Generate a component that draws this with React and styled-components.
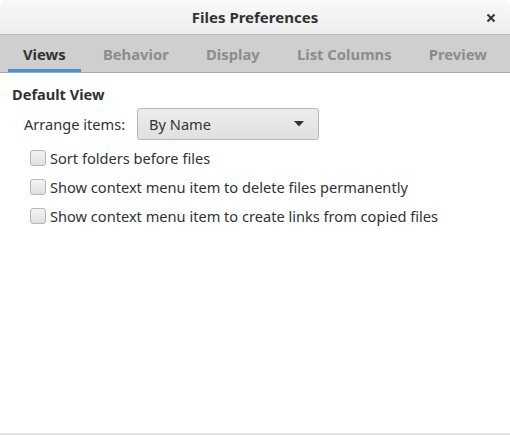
import React from "react";
import styled, { createGlobalStyle } from "styled-components";

const GlobalStyle = createGlobalStyle`
	html, body {
		margin: 0;
		padding: 0;
		background: #ffffff;
	}
	body {
		font-family: "Noto Sans", "DejaVu Sans", sans-serif;
		font-size: 14.6px;
		color: #2e3436;
	}
`;

const tabs = ["Views", "Behavior", "Display", "List Columns", "Preview"];

const options = [
	"Sort folders before files",
	"Show context menu item to delete files permanently",
	"Show context menu item to create links from copied files",
];

const App = () => {
	return (
		<>
			<GlobalStyle />
			<Window>
				<TitleBar>
					<Title>Files Preferences</Title>
					<CloseButton aria-label="Close">
						<svg width="10" height="10" viewBox="0 0 10 10">
							<path d="M1.5 1.5 L8.5 8.5 M8.5 1.5 L1.5 8.5" stroke="#2e3436" strokeWidth="2" />
						</svg>
					</CloseButton>
				</TitleBar>

				<TabBar>
					{tabs.map((tab, i) => (
						<Tab key={tab} active={i === 0}>
							{tab}
						</Tab>
					))}
				</TabBar>

				<Content>
					<SectionTitle>Default View</SectionTitle>
					<ArrangeRow>
						<FieldLabel>Arrange items:</FieldLabel>
						<Combo>
							<span>By Name</span>
							<svg width="10" height="6" viewBox="0 0 10 6">
								<path d="M0 0 L10 0 L5 5.5 Z" fill="#2e3436" />
							</svg>
						</Combo>
					</ArrangeRow>
					<CheckList>
						{options.map((text) => (
							<CheckRow key={text}>
								<CheckBox />
								<span>{text}</span>
							</CheckRow>
						))}
					</CheckList>
				</Content>
			</Window>
		</>
	);
};

const Window = styled.div`
	width: 510px;
	height: 435px;
	display: flex;
	flex-direction: column;
	background: #ffffff;
	border-bottom: 2px solid #e3e3e3;
	box-sizing: border-box;
	overflow: hidden;
`;

const TitleBar = styled.div`
	position: relative;
	height: 35px;
	flex-shrink: 0;
	display: flex;
	align-items: center;
	justify-content: center;
	background: linear-gradient(#f9f9f9, #eeeeee);
	border-top-left-radius: 7px;
	border-top-right-radius: 7px;
	border-bottom: 1px solid #b7b7b7;
	box-sizing: border-box;
`;

const Title = styled.div`
	font-weight: bold;
	font-size: 15px;
	color: #2e3436;
`;

const CloseButton = styled.div`
	position: absolute;
	right: 14px;
	top: 13px;
	display: flex;
`;

const TabBar = styled.div`
	height: 38px;
	flex-shrink: 0;
	display: flex;
	align-items: stretch;
	justify-content: space-between;
	padding: 0 8px;
	background: #cfcfcf;
	border-bottom: 1px solid #a8a8a8;
	box-sizing: border-box;
`;

const Tab = styled.div`
	display: flex;
	align-items: center;
	justify-content: center;
	padding: 3px 15px 0;
	font-weight: bold;
	font-size: 14.8px;
	color: ${(p) => (p.active ? "#2e3436" : "#8b8d8d")};
	border-bottom: 3px solid ${(p) => (p.active ? "#4a90d9" : "transparent")};
`;

const Content = styled.div`
	flex: 1;
	padding: 11px 12px;
`;

const SectionTitle = styled.div`
	font-weight: bold;
	line-height: 20px;
`;

const ArrangeRow = styled.div`
	display: flex;
	align-items: center;
	gap: 12px;
	margin-top: 4px;
	padding-left: 12px;
`;

const FieldLabel = styled.span``;

const Combo = styled.div`
	width: 182px;
	height: 32px;
	box-sizing: border-box;
	display: flex;
	align-items: center;
	justify-content: space-between;
	padding: 0 14px 0 11px;
	border: 1px solid #b6b6b3;
	border-radius: 3px;
	background: linear-gradient(#ededed, #e0e0e0);
`;

const CheckList = styled.div`
	display: flex;
	flex-direction: column;
	gap: 9px;
	margin-top: 8px;
	padding-left: 18px;
`;

const CheckRow = styled.label`
	display: flex;
	align-items: center;
	gap: 4px;
	line-height: 20px;
`;

const CheckBox = styled.span`
	width: 16px;
	height: 16px;
	box-sizing: border-box;
	border: 1px solid #b6b6b3;
	border-radius: 3px;
	background: linear-gradient(#f4f4f4, #e0e0e0);
`;

export default App;
